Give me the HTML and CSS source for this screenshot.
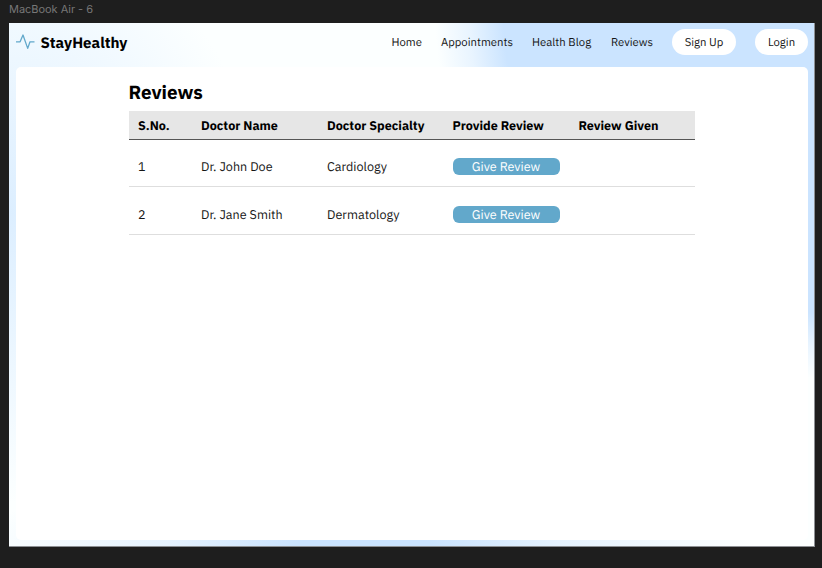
FILE: index.html
```
<!DOCTYPE html>
<html lang="en">
<head>
<meta charset="utf-8">
<title>StayHealthy</title>
<link rel="stylesheet" href="styles.css">
</head>
<body>
<div class="frame-label">MacBook Air - 6</div>
<div class="frame">
  <header class="header">
    <div class="brand">
      <svg class="pulse" viewBox="0 0 20 16" width="20" height="16"><path d="M0 7.8H4.1L7 1L11.7 14.4L14 7.8H18.5" fill="none" stroke="#62a8cb" stroke-width="1.3" stroke-linejoin="round"/></svg>
      <span class="brand-name">StayHealthy</span>
    </div>
    <nav class="nav">
      <a class="home">Home</a>
      <a class="appointments">Appointments</a>
      <a class="blog">Health Blog</a>
      <a class="reviews">Reviews</a>
      <a class="pill signup">Sign Up</a>
      <a class="pill login">Login</a>
    </nav>
  </header>
  <main class="panel">
    <h1>Reviews</h1>
    <div class="table">
      <div class="row head"><span>S.No.</span><span>Doctor Name</span><span>Doctor Specialty</span><span>Provide Review</span><span>Review Given</span></div>
      <div class="row"><span>1</span><span>Dr. John Doe</span><span>Cardiology</span><button>Give Review</button></div>
      <div class="row"><span>2</span><span>Dr. Jane Smith</span><span>Dermatology</span><button>Give Review</button></div>
    </div>
  </main>
</div>
</body>
</html>
```
FILE: styles.css
```
* { box-sizing: border-box; }
body { margin: 0; height: 568px; overflow: hidden; background: #1e1e1e; color: #000; font-family: "IBM Plex Sans", Roboto, sans-serif; padding-left: 9px; text-rendering: geometricPrecision; }
.frame-label { height: 23px; font: 11px/18px Inter, sans-serif; color: #777; letter-spacing: -.03px; }
.frame {
  width: 806px; height: 524px; padding: 0 6.5px 6.5px;
  border-right: 1px solid #8d9094; border-bottom: 1px solid #8d9094;
  background:
    radial-gradient(ellipse 390px 85px at 355px 525px, #cbe4ff 0 18%, rgba(203,228,255,.45) 50%, rgba(203,228,255,0) 100%),
    radial-gradient(ellipse 380px 365px at 806px -10px, #cbe4ff 0 82%, rgba(203,228,255,.4) 91%, rgba(203,228,255,0) 100%),
    radial-gradient(ellipse 250px 290px at 0 190px, #dceeff 0, rgba(220,238,255,0) 100%),
    #fcffff;
}
.header { height: 44px; display: flex; justify-content: space-between; align-items: center; padding-bottom: 6px; }
.brand { display: flex; align-items: center; gap: 5px; }
.brand-name { font-size: 15.1px; line-height: 20px; font-weight: 700; white-space: nowrap; padding-top: 3px; }
.nav { display: flex; align-items: center; gap: 19px; font-size: 11.32px; line-height: 14px; white-space: nowrap; color: #151515; margin-right: -.5px; }
.nav a { padding-top: 1px; }
.home { width: 30.5px; }
.appointments { width: 72px; }
.blog { width: 60px; }
.reviews { width: 42px; }
.pill { height: 25.5px; border-radius: 13px; background: #fff; display: flex; align-items: center; justify-content: center; }
.signup { width: 64px; }
.login { width: 53px; }
.panel { height: 473px; margin-right: -.5px; border-radius: 5px; background: #fff; padding: 13px 113px 0; }
h1 { margin: 0; height: 30.5px; font-size: 18.9px; line-height: 26px; font-weight: 700; }
.table { width: 566px; font-size: 12.58px; }
.row { display: grid; grid-template-columns: 63px 126px 125.5px 126px 116px; height: 47.5px; padding: 8px 0 0 9.5px; align-items: center; border-bottom: 1px solid #dedede; white-space: nowrap; color: #151515; }
.row:last-child { padding-top: 9.5px; }
.row.head { height: 29px; padding-top: 2px; background: #e6e6e6; border-bottom-color: #555; font-weight: 700; color: #000; }
button { width: 107px; height: 17px; margin-top: -1px; padding: 1px 0 0; border: 0; border-radius: 6px; background: #62a8cb; color: #fff; font: 12.58px/16px "IBM Plex Sans", Roboto, sans-serif; text-rendering: inherit; }
```
